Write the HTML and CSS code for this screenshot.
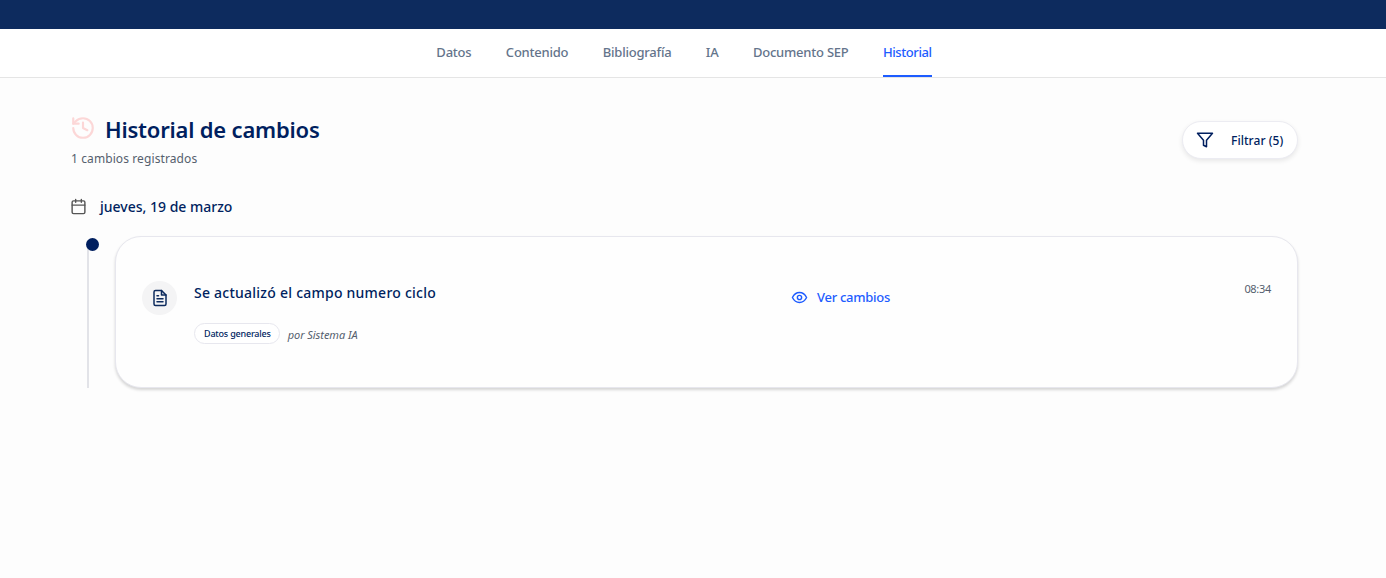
FILE: index.html
```html
<!DOCTYPE html>
<html lang="es">
<head>
<meta charset="utf-8">
<title>Historial de cambios</title>
<link rel="stylesheet" href="styles.css">
</head>
<body>
<div class="topbar"></div>
<nav class="tabs">
  <a class="tab">Datos</a>
  <a class="tab">Contenido</a>
  <a class="tab">Bibliografía</a>
  <a class="tab">IA</a>
  <a class="tab">Documento SEP</a>
  <a class="tab active">Historial</a>
</nav>
<main class="main">
  <header class="head">
    <div>
      <div class="title-row">
        <svg class="title-icon" viewBox="0 0 24 24" fill="none" stroke="currentColor" stroke-width="2" stroke-linecap="round" stroke-linejoin="round"><path d="M3 12a9 9 0 1 0 9-9 9.75 9.75 0 0 0-6.74 2.74L3 8"/><path d="M3 3v5h5"/><path d="M12 7v5l4 2"/></svg>
        <h1>Historial de cambios</h1>
      </div>
      <p class="count">1 cambios registrados</p>
    </div>
    <button class="filter">
      <svg class="filter-icon" viewBox="0 0 24 24" fill="none" stroke="currentColor" stroke-width="2" stroke-linecap="round" stroke-linejoin="round"><path d="M22 3H2l8 9.46V19l4 2v-8.54L22 3z"/></svg>
      <span>Filtrar (5)</span>
    </button>
  </header>
  <section>
    <div class="day">
      <svg class="day-icon" viewBox="0 0 24 24" fill="none" stroke="currentColor" stroke-width="2" stroke-linecap="round" stroke-linejoin="round"><rect x="3" y="4" width="18" height="18" rx="2"/><path d="M16 2v4M8 2v4M3 10h18"/></svg>
      <h2>jueves, 19 de marzo</h2>
    </div>
    <div class="timeline">
      <span class="dot"></span>
      <article class="card">
        <div class="doc-badge">
          <svg class="doc-icon" viewBox="0 0 24 24" fill="none" stroke="currentColor" stroke-width="2" stroke-linecap="round" stroke-linejoin="round"><path d="M14 2H6a2 2 0 0 0-2 2v16a2 2 0 0 0 2 2h12a2 2 0 0 0 2-2V8z"/><path d="M14 2v6h6M16 13H8M16 17H8M10 9H8"/></svg>
        </div>
        <div class="card-body">
          <h3>Se actualizó el campo numero ciclo</h3>
          <div class="meta">
            <span class="tag">Datos generales</span>
            <span class="author">por Sistema IA</span>
          </div>
        </div>
        <a class="view">
          <svg class="view-icon" viewBox="0 0 24 24" fill="none" stroke="currentColor" stroke-width="2" stroke-linecap="round" stroke-linejoin="round"><path d="M2 12s3.5-7 10-7 10 7 10 7-3.5 7-10 7-10-7-10-7z"/><circle cx="12" cy="12" r="3"/></svg>
          Ver cambios
        </a>
        <time class="time">08:34</time>
      </article>
    </div>
  </section>
</main>
</body>
</html>
```
FILE: styles.css
```css
* { box-sizing: border-box; }
html, body { margin: 0; height: 100%; }
body {
  font-family: "Noto Sans", "Open Sans", sans-serif;
  background: #fdfdfd;
  color: #001f5f;
  overflow: hidden;
}
.topbar { height: 29px; background: #0d2b5e; }
.tabs {
  height: 49px;
  background: #fff;
  border-bottom: 1px solid #e5e5e5;
  display: flex;
  justify-content: center;
  gap: 34.4px;
  padding-right: 18px;
}
.tab {
  height: 48px;
  line-height: 46px;
  font-size: 13px;
  font-weight: 550;
  color: #64748b;
  letter-spacing: -0.22px;
}
.tab.active {
  color: #1d5cff;
  border-bottom: 2px solid #1d5cff;
  letter-spacing: -0.42px;
}
.main { padding: 36px 88px 0 71px; }
.head { display: flex; justify-content: space-between; align-items: flex-start; }
.title-row { display: flex; align-items: center; gap: 9px; height: 30px; }
.title-icon { width: 26px; height: 26px; margin: -2px 0 0 -1px; color: #fcd7d7; }
h1 { margin: 0; font-size: 22px; font-weight: 600; letter-spacing: -0.2px; color: #001f5f; }
.count { margin: 6px 0 0; font-size: 12px; line-height: 17px; color: #555f6e; letter-spacing: 0.1px; }
.filter {
  margin-top: 7px;
  width: 116px;
  height: 38px;
  display: flex;
  align-items: center;
  gap: 17px;
  padding: 0 0 0 13px;
  font: 550 12px "Noto Sans", sans-serif;
  letter-spacing: 0.05px;
  color: #001f5f;
  background: #fff;
  border: 1px solid #ececf2;
  border-radius: 19px;
  box-shadow: 0 2px 5px rgba(0, 0, 0, 0.09);
}
.filter-icon { width: 18px; height: 18px; }
.day { display: flex; align-items: center; gap: 13px; margin-top: 29px; height: 20px; }
.day-icon { width: 17px; height: 17px; margin-left: -1px; color: #555; }
h2 { margin: 0; font-size: 14px; font-weight: 550; color: #001f5f; letter-spacing: 0; }
.timeline {
  position: relative;
  margin-top: 20px;
  padding-left: 44px;
}
.timeline::before {
  content: "";
  position: absolute;
  left: 16px;
  top: 9px;
  bottom: 0;
  width: 2px;
  background: #e2e3e8;
}
.dot {
  position: absolute;
  left: 15px;
  top: 2px;
  width: 13px;
  height: 13px;
  border-radius: 50%;
  background: #001f5f;
}
.card {
  height: 152px;
  display: flex;
  align-items: flex-start;
  padding: 44px 26px 0;
  background: #fefefe;
  border: 1px solid #e7e7ee;
  border-radius: 26px;
  box-shadow: 0 2px 3px rgba(0, 0, 0, 0.16);
}
.doc-badge {
  width: 35px;
  height: 34px;
  border-radius: 50%;
  background: #f4f4f5;
  display: flex;
  align-items: center;
  justify-content: center;
  flex: none;
}
.doc-icon { width: 18px; height: 18px; color: #0d2b5e; }
.card-body { margin-left: 17px; width: 597px; flex: none; }
h3 { margin: 0; font-size: 14px; line-height: 23px; font-weight: 550; color: #001f5f; letter-spacing: 0.24px; }
.meta { display: flex; align-items: center; gap: 8px; margin-top: 19px; }
.tag {
  height: 21px;
  padding: 0 8px 0 9px;
  line-height: 19px;
  font-size: 9px;
  font-weight: 550;
  color: #001f5f;
  background: #fff;
  border: 1px solid #e7e7ee;
  border-radius: 11px;
  letter-spacing: -0.2px;
}
.author { margin-top: 2px; font-size: 11px; font-style: italic; color: #555f6e; letter-spacing: -0.05px; }
.view {
  display: flex;
  align-items: center;
  gap: 9px;
  margin-top: 7px;
  font-size: 13px;
  line-height: 18px;
  font-weight: 550;
  color: #1d5cff;
  letter-spacing: -0.28px;
}
.view-icon { width: 17px; height: 17px; }
.time { margin-left: auto; margin-top: 0; font-size: 11px; line-height: 16px; color: #555f6e; letter-spacing: -0.3px; }
```
